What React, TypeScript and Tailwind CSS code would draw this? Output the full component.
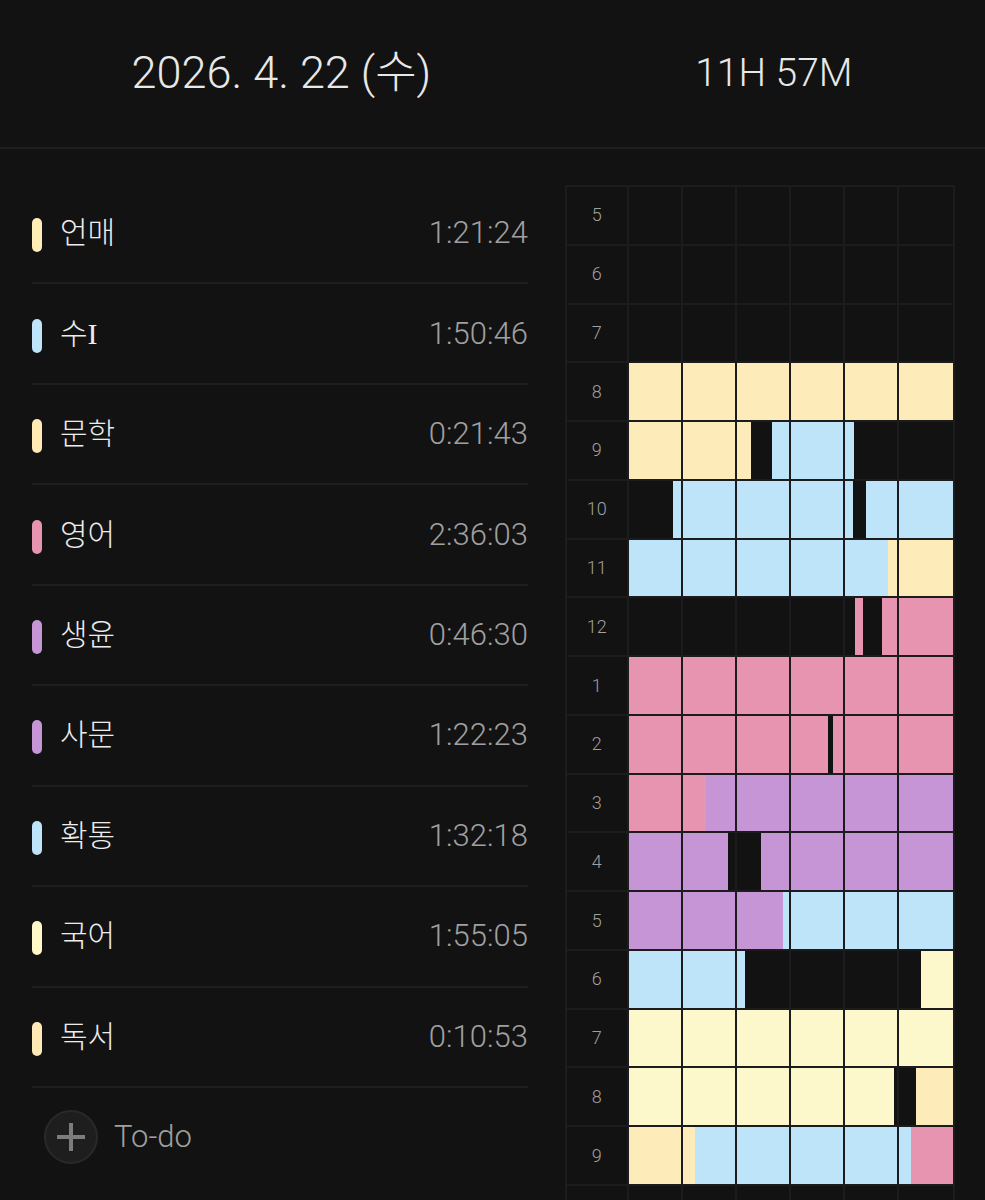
import type { CSSProperties } from 'react';

type Segment = { from: number; to: number; color: string };
type Hour = { label: string; segments: Segment[] };

const BUTTER = '#fdebba';
const CREAM = '#fdf8cb';
const SKY = '#bde4f9';
const PINK = '#e794b0';
const PURPLE = '#c595d6';

const subjects = [
  { name: '언매', time: '1:21:24', color: '#ffedb8' },
  { name: '수', suffix: 'I', time: '1:50:46', color: SKY },
  { name: '문학', time: '0:21:43', color: '#ffe9b5' },
  { name: '영어', time: '2:36:03', color: PINK },
  { name: '생윤', time: '0:46:30', color: PURPLE },
  { name: '사문', time: '1:22:23', color: PURPLE },
  { name: '확통', time: '1:32:18', color: SKY },
  { name: '국어', time: '1:55:05', color: '#fff8c8' },
  { name: '독서', time: '0:10:53', color: '#ffe9b5' },
];

// from / to are minutes within the hour
const hours: Hour[] = [
  { label: '5', segments: [] },
  { label: '6', segments: [] },
  { label: '7', segments: [] },
  { label: '8', segments: [{ from: 0, to: 60, color: BUTTER }] },
  {
    label: '9',
    segments: [
      { from: 0, to: 22.7, color: BUTTER },
      { from: 26.8, to: 41.7, color: SKY },
    ],
  },
  {
    label: '10',
    segments: [
      { from: 8.4, to: 41.6, color: SKY },
      { from: 44.1, to: 60, color: SKY },
    ],
  },
  {
    label: '11',
    segments: [
      { from: 0, to: 48.2, color: SKY },
      { from: 48.2, to: 60, color: BUTTER },
    ],
  },
  {
    label: '12',
    segments: [
      { from: 42, to: 43.4, color: PINK },
      { from: 47.2, to: 60, color: PINK },
    ],
  },
  { label: '1', segments: [{ from: 0, to: 60, color: PINK }] },
  {
    label: '2',
    segments: [
      { from: 0, to: 37.1, color: PINK },
      { from: 38, to: 60, color: PINK },
    ],
  },
  {
    label: '3',
    segments: [
      { from: 0, to: 14.5, color: PINK },
      { from: 14.5, to: 60, color: PURPLE },
    ],
  },
  {
    label: '4',
    segments: [
      { from: 0, to: 18.7, color: PURPLE },
      { from: 24.7, to: 60, color: PURPLE },
    ],
  },
  {
    label: '5',
    segments: [
      { from: 0, to: 28.8, color: PURPLE },
      { from: 28.8, to: 60, color: SKY },
    ],
  },
  {
    label: '6',
    segments: [
      { from: 0, to: 21.6, color: SKY },
      { from: 54.1, to: 60, color: CREAM },
    ],
  },
  { label: '7', segments: [{ from: 0, to: 60, color: CREAM }] },
  {
    label: '8',
    segments: [
      { from: 0, to: 49.4, color: CREAM },
      { from: 53.2, to: 60, color: BUTTER },
    ],
  },
  {
    label: '9',
    segments: [
      { from: 0, to: 12.4, color: BUTTER },
      { from: 12.4, to: 52.2, color: SKY },
      { from: 52.2, to: 60, color: PINK },
    ],
  },
  { label: '', segments: [] },
];

// Paints the part of each segment that falls inside one ten minute cell
const cellFill = (segments: Segment[], start: number): CSSProperties => {
  const stops = segments
    .filter((s) => s.from < start + 10 && s.to > start)
    .map((s) => {
      const a = Math.max(0, (s.from - start) * 10);
      const b = Math.min(100, (s.to - start) * 10);
      return `transparent ${a}%, ${s.color} ${a}%, ${s.color} ${b}%, transparent ${b}%`;
    });
  return stops.length ? { backgroundImage: `linear-gradient(90deg, ${stops.join(', ')})` } : {};
};

const Header = () => (
  <header className="grid grid-cols-[4fr_3fr] border-b-2 border-[#1e1e20] pt-10 pb-[41px] text-center leading-[66px] text-[#e8e8e8]">
    <h1 className="text-[45px]">2026. 4. 22 (수)</h1>
    <p className="text-[39px]">11H 57M</p>
  </header>
);

const SubjectList = () => (
  <section className="pt-[35px] pr-[35px] pl-8">
    <ul className="grid h-[904px] auto-rows-fr">
      {subjects.map((s) => (
        <li key={s.name} className="flex items-center border-b-2 border-[#1e1e20]">
          <span className="mt-1 h-[34px] w-[10px] rounded-full" style={{ backgroundColor: s.color }} />
          <span className="ml-[18px] text-[30px] leading-[44px] text-[#ececec]">
            {s.name}
            {s.suffix && <span className="font-['Liberation_Serif',serif]">{s.suffix}</span>}
          </span>
          <span className="ml-auto text-[31px] leading-[44px] text-[#a0a0a0]">{s.time}</span>
        </li>
      ))}
    </ul>
    <button type="button" className="mt-[22px] ml-3 flex items-center gap-4 text-[31px] text-[#a0a0a0]">
      <span className="flex size-[54px] items-center justify-center rounded-full border-2 border-[#292929] bg-[#1e1e1e]">
        <svg viewBox="0 0 28 28" className="size-7" stroke="#7c7c7c" strokeWidth="4" aria-hidden="true">
          <path d="M14 0v28M0 14h28" />
        </svg>
      </span>
      To-do
    </button>
  </section>
);

const TimeTable = () => (
  <section className="pt-9 pr-[30px] pl-[2px]">
    <table className="h-[1060px] w-full table-fixed border-collapse">
      <colgroup>
        <col className="w-[62px]" />
        <col />
        <col />
        <col />
        <col />
        <col />
        <col className="w-14" />
      </colgroup>
      <tbody>
        {hours.map((hour, i) => (
          <tr key={i}>
            <th scope="row" className="h-14 border-2 border-[#1c1c1e] p-0 text-lg font-light text-[#a0a0a0]">
              {hour.label}
            </th>
            {[0, 10, 20, 30, 40, 50].map((start) => (
              <td key={start} className="border-2 border-[#1c1c1e] p-0" style={cellFill(hour.segments, start)} />
            ))}
          </tr>
        ))}
      </tbody>
    </table>
  </section>
);

export default function App() {
  return (
    <div className="h-screen overflow-hidden bg-[#121212] font-['Roboto','Noto_Sans_CJK_KR',sans-serif] font-light">
      <Header />
      <main className="grid grid-cols-[4fr_3fr] items-start">
        <SubjectList />
        <TimeTable />
      </main>
    </div>
  );
}
